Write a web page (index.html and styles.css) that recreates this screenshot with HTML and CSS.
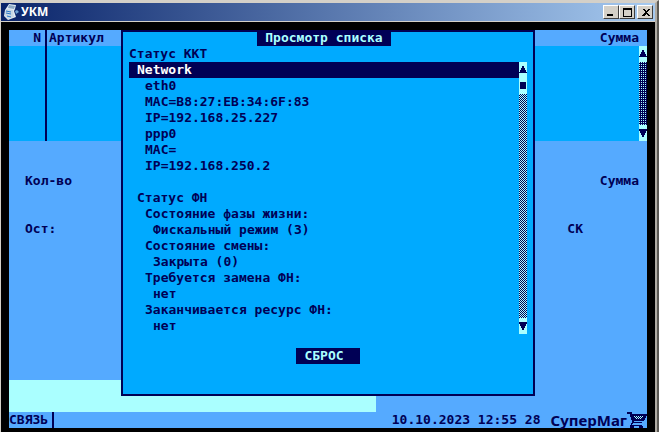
FILE: index.html
```html
<!DOCTYPE html>
<html lang="ru">
<head>
  <meta charset="UTF-8" />
  <meta name="viewport" content="width=device-width, initial-scale=1" />
  <title>УКМ</title>
  <link rel="stylesheet" href="styles.css">
</head>
<body>
<div class="window">

  <!-- Title bar -->
  <header class="titlebar">
    <svg class="app-icon" viewBox="0 0 16 16" aria-hidden="true">
      <path d="M4 3L6 0L13 1L12 5L11 7L13 13L5 16L1 12L2 6Z" fill="#e4edf4" />
      <path d="M6 1L12 2L11 5L5 4Z" fill="#8da9c4" />
      <path d="M4 5L10 6L11 13L5 15L2 12L2 7Z" fill="#c9d8e4" />
      <path d="M3 7L8 8M3 9L8 10M4 12L8 13" stroke="#2878c8" />
      <path d="M12 7L14 6L16 8L13 10Z" fill="#6fa3d4" />
    </svg>
    <h1>УКМ</h1>
    <button class="win-btn" aria-label="Свернуть">
      <svg viewBox="0 0 11 9"><path d="M1 6H7V8H1Z" /></svg>
    </button>
    <button class="win-btn" aria-label="Развернуть">
      <svg viewBox="0 0 11 9"><path fill-rule="evenodd" d="M1 0H10V9H1ZM2 2H9V8H2Z" /></svg>
    </button>
    <button class="win-btn close" aria-label="Закрыть">
      <svg viewBox="0 0 11 9"><path d="M2 1H4L6 3L8 1H10L7 4L10 8H8L6 6L4 8H2L5 4Z" /></svg>
    </button>
  </header>

  <main class="screen">

    <!-- Receipt items -->
    <table class="items">
      <thead>
        <tr>
          <th class="num">N</th>
          <th class="article">Артикул</th>
          <th class="sum" colspan="2">Сумма</th>
        </tr>
      </thead>
      <tbody>
        <tr>
          <td class="num"></td>
          <td></td>
          <td></td>
          <td class="scroll-cell">
            <div class="scrollbar dense">
              <button aria-label="Вверх"><svg viewBox="0 0 8 16"><path d="M3 4H5V6H6V8H7V10H8V11H0V10H1V8H2V6H3Z" /></svg></button>
              <div class="track"></div>
              <button aria-label="Вниз"><svg viewBox="0 0 8 16"><path d="M0 4H8V6H7V8H6V10H5V12H3V10H2V8H1V6H0Z" /></svg></button>
            </div>
          </td>
        </tr>
      </tbody>
    </table>

    <!-- Totals -->
    <section class="totals">
      <div class="row"><span>Кол-во</span><span>Сумма</span></div>
      <div class="row"><span>Ост:</span><span class="sk">СК</span></div>
    </section>

    <input class="entry" type="text" aria-label="Ввод">

    <!-- Status line -->
    <footer class="status">
      <span class="link-state">СВЯЗЬ</span>
      <span class="clock">10.10.2023 12:55 28</span>
      <span class="brand">СуперМаг</span>
      <svg class="cart" viewBox="0 0 20 16" aria-hidden="true">
        <path d="M0 0H5V2H20V4H19V6H18V8H17V9H7V10H15V11H6V12H5V13H15V14H16V16H12V14H7V16H3V13H4V11H5V8H4V5H3V2H0Z" />
        <path class="holes" d="M7 4.500h1M9 4.500h1M11 4.500h1M13 4.500h1M15 4.500h1M8 5.500h1M10 5.500h1M12 5.500h1M14 5.500h1M9 6.500h1M11 6.500h1M13 6.500h1" />
      </svg>
    </footer>

    <!-- List dialog -->
    <section class="dialog" role="dialog" aria-labelledby="dialogTitle">
      <h2 id="dialogTitle">Просмотр списка</h2>
      <p class="caption">Статус ККТ</p>
      <div class="list-box">
        <ul class="list">
          <li class="selected">Network</li>
          <li class="l1">eth0</li>
          <li class="l1">MAC=B8:27:EB:34:6F:83</li>
          <li class="l1">IP=192.168.25.227</li>
          <li class="l1">ppp0</li>
          <li class="l1">MAC=</li>
          <li class="l1">IP=192.168.250.2</li>
          <li></li>
          <li>Статус ФН</li>
          <li class="l1">Состояние фазы жизни:</li>
          <li class="l2">Фискальный режим (3)</li>
          <li class="l1">Состояние смены:</li>
          <li class="l2">Закрыта (0)</li>
          <li class="l1">Требуется замена ФН:</li>
          <li class="l2">нет</li>
          <li class="l1">Заканчивается ресурс ФН:</li>
          <li class="l2">нет</li>
        </ul>
        <div class="scrollbar">
          <button aria-label="Вверх"><svg viewBox="0 0 8 16"><path d="M3 4H5V6H6V8H7V10H8V11H0V10H1V8H2V6H3Z" /></svg></button>
          <div class="thumb"></div>
          <div class="track"></div>
          <button aria-label="Вниз"><svg viewBox="0 0 8 16"><path d="M0 4H8V6H7V8H6V10H5V12H3V10H2V8H1V6H0Z" /></svg></button>
        </div>
      </div>
      <button class="reset">СБРОС</button>
    </section>

  </main>
</div>
</body>
</html>
```
FILE: styles.css
```css
* {
  margin: 0; padding: 0; box-sizing: border-box;
}
:root {
  --navy: #000055;
  --sky: #00aaff;
  --blue: #55aaff;
  --ice: #aaffff;
}
body {
  background: #000;
  color: var(--navy);
  font: bold 13px/16px "DejaVu Sans Mono", monospace;
}
button, input {
  font: inherit;
  border: none;
  border-radius: 0;
}
svg {
  display: block;
  shape-rendering: crispEdges;
}
.window {
  min-height: 100vh;
  display: flex;
  flex-direction: column;
  border: solid #d4d0c8;
  border-width: 3px 4px 0 1px;
  border-right: 4px ridge #b0aca4;
}

/* Title bar */
.titlebar {
  height: 19px;
  display: flex;
  align-items: center;
  padding: 0 2px;
  background: linear-gradient(90deg, #0a246a, #a6caf0);
  border-bottom: 1px solid #d4d0c8;
}
.titlebar h1 {
  flex: 1;
  margin-left: 2px;
  color: #fff;
  font: bold 12px/16px "Noto Sans", sans-serif;
}
.app-icon {
  width: 16px;
  height: 16px;
  shape-rendering: auto;
}
.win-btn {
  width: 16px;
  height: 14px;
  display: flex;
  align-items: center;
  justify-content: center;
  background: #d4d0c8;
  border: 1px solid;
  border-color: #fff #404040 #404040 #fff;
}
.win-btn svg {
  width: 11px;
  height: 9px;
}
.close {
  margin-left: 2px;
}

/* Terminal screen */
.screen {
  flex: 1;
  display: flex;
  flex-direction: column;
  position: relative;
  margin: 8px 8px 4px;
  background: var(--blue);
}
.items {
  width: 100%;
  height: 111px;
  table-layout: fixed;
  border-collapse: collapse;
  background: var(--sky);
}
.items thead {
  background: var(--blue);
}
.items th {
  height: 16px;
  font-weight: bold;
  text-align: right;
}
.items .num {
  width: 37px;
  padding-right: 4px;
  border-right: 2px solid var(--navy);
}
.items .article {
  padding-left: 2px;
  text-align: left;
}
.items .sum {
  padding-right: 8px;
}
.items td {
  height: 95px;
}
.scroll-cell {
  width: 8px;
}
.totals {
  flex: 1;
  display: flex;
  flex-direction: column;
  gap: 32px;
  padding: 32px 8px 0 16px;
}
.row {
  display: flex;
  justify-content: space-between;
}
.sk {
  margin-right: 56px;
}
.entry {
  width: calc(50% + 48px);
  height: 32px;
  padding: 0 8px;
  color: var(--navy);
  background: var(--ice);
}
.status {
  height: 16px;
  display: flex;
}
.link-state {
  padding-right: 4px;
  border-right: 2px solid var(--navy);
}
.clock {
  margin-left: auto;
}
.brand {
  margin-left: 10px;
  font: bold 15px/16px "Noto Sans", sans-serif;
}
.cart {
  width: 20px;
  height: 16px;
  fill: var(--navy);
}
.cart .holes {
  stroke: var(--ice);
}

/* Scrollbars */
.scrollbar {
  width: 8px;
  height: 100%;
  display: flex;
  flex-direction: column;
  margin-left: auto;
  background: var(--ice);
}
.list-box .scrollbar {
  height: auto;
}
.scrollbar button {
  width: 8px;
  height: 16px;
  background: var(--ice);
}
.scrollbar svg {
  width: 8px;
  height: 16px;
  fill: var(--navy);
}
.track {
  flex: 1;
  background: repeating-conic-gradient(var(--navy) 0 25%, var(--ice) 0 50%) 0 0 / 2px 2px;
}
.dense .track {
  background: conic-gradient(var(--navy) 75%, var(--ice) 0) 0 0 / 2px 2px;
}
.thumb {
  height: 16px;
  border: solid var(--ice);
  border-width: 4px 1px 5px;
  background: var(--navy);
}

/* List dialog */
.dialog {
  position: absolute;
  top: 0;
  left: 112px;
  right: 112px;
  bottom: 32px;
  display: flex;
  flex-direction: column;
  padding: 0 6px;
  background: var(--sky);
  border: 2px solid var(--navy);
}
.dialog h2 {
  align-self: center;
  height: 14px;
  margin-right: 8px;
  padding: 0 8px;
  color: var(--ice);
  background: var(--navy);
  font-size: 13px;
  line-height: 12px;
}
.list-box {
  display: flex;
}
.list {
  flex: 1;
  list-style: none;
}
.list li {
  height: 16px;
  padding-left: 8px;
}
.list .l1 {
  padding-left: 16px;
}
.list .l2 {
  padding-left: 24px;
}
.list .selected {
  color: #fff;
  background: var(--navy);
}
.reset {
  align-self: center;
  width: 64px;
  height: 16px;
  margin-top: 14px;
  padding-right: 8px;
  color: var(--ice);
  background: var(--navy);
}
```
